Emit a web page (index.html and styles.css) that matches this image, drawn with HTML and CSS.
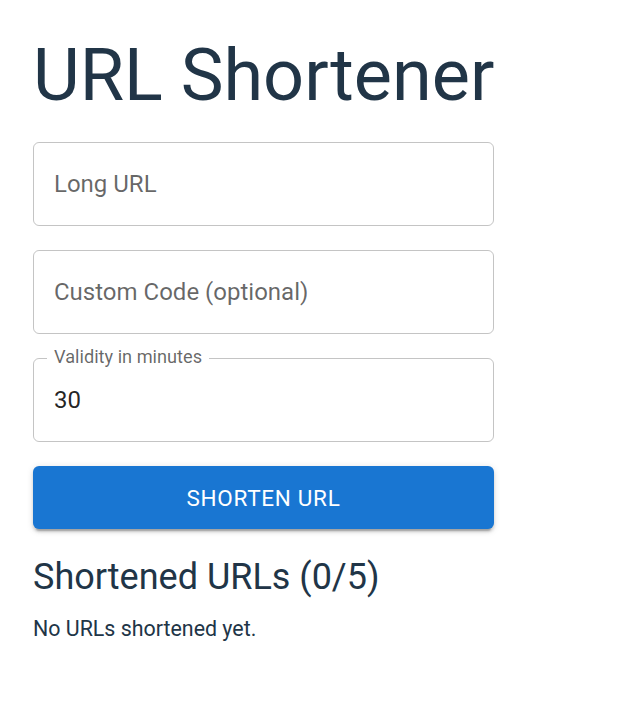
FILE: index.html
```html
<!DOCTYPE html>
<html lang="en">
<head>
<meta charset="utf-8">
<title>URL Shortener</title>
<link rel="stylesheet" href="styles.css">
</head>
<body>
<main class="container">
  <h1 class="title">URL Shortener</h1>
  <form class="form">
    <div class="field">
      <label class="placeholder">Long URL</label>
    </div>
    <div class="field">
      <label class="placeholder">Custom Code (optional)</label>
    </div>
    <div class="field">
      <label class="shrunk">Validity in minutes</label>
      <span class="value">30</span>
    </div>
    <button type="button" class="btn">Shorten URL</button>
  </form>
  <h2 class="subtitle">Shortened URLs (0/5)</h2>
  <p class="empty">No URLs shortened yet.</p>
</main>
</body>
</html>
```

FILE: styles.css
```css
* { box-sizing: border-box; }
html, body {
  margin: 0;
  padding: 0;
  background: #ffffff;
}
body {
  font-family: Roboto, "Liberation Sans", sans-serif;
  color: #213547;
}
.container {
  width: 461px;
  margin-left: 33px;
  padding-top: 34px;
  display: flex;
  flex-direction: column;
}
.title {
  margin: 0;
  font-size: 72px;
  font-weight: 400;
  line-height: 84px;
  white-space: nowrap;
  color: #213547;
}
.form {
  margin-top: 24px;
  display: flex;
  flex-direction: column;
  gap: 24px;
}
.field {
  position: relative;
  height: 84px;
  display: flex;
  align-items: center;
  padding: 0 20px;
  border: 1px solid rgba(0, 0, 0, 0.23);
  border-radius: 6px;
}
.placeholder {
  font-size: 24px;
  color: rgba(0, 0, 0, 0.6);
  line-height: 1.4375;
}
.shrunk {
  position: absolute;
  left: 13px;
  top: -14px;
  padding: 0 7px;
  background: #ffffff;
  font-size: 18.2px;
  line-height: 24px;
  color: rgba(0, 0, 0, 0.6);
}
.value {
  font-size: 24px;
  color: rgba(0, 0, 0, 0.87);
  line-height: 1.4375;
}
.btn {
  height: 63px;
  border: none;
  border-radius: 6px;
  background: #1976d2;
  color: #ffffff;
  font-family: Roboto, "Liberation Sans", sans-serif;
  font-size: 22.5px;
  font-weight: 400;
  letter-spacing: 0.7px;
  text-transform: uppercase;
  box-shadow: 0 4.5px 1.5px -3px rgba(0,0,0,0.2), 0 3px 3px 0 rgba(0,0,0,0.14), 0 1.5px 7.5px 0 rgba(0,0,0,0.12);
}
.subtitle {
  margin: 24px 0 0;
  font-size: 36px;
  font-weight: 400;
  line-height: 48px;
}
.empty {
  margin: 12px 0 0;
  font-size: 21.4px;
  line-height: 1.5;
}
```
